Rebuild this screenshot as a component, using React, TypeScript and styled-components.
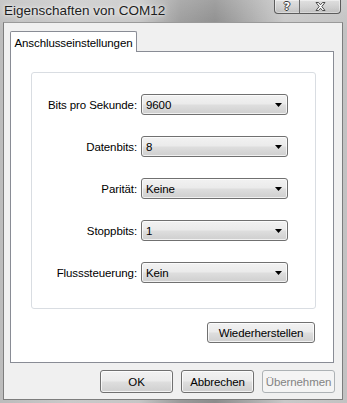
import React from "react";
import styled, { createGlobalStyle } from "styled-components";

const Global = createGlobalStyle`
  html, body { margin: 0; padding: 0; }
  body { background: #ffffff; font-family: "Liberation Sans", Arial, sans-serif; }
  * { box-sizing: border-box; }
`;

const Window = styled.div`
  width: 347px;
  height: 403px;
  display: flex;
  flex-direction: column;
  overflow: hidden;
  font-family: "Liberation Sans", Arial, sans-serif;
  background:
    linear-gradient(to bottom, rgba(255,255,255,0.18), rgba(255,255,255,0) 30px),
    linear-gradient(to right, #bcbcbc 0%, #c9c9c9 20%, #c6c6c6 40%, #9a9a9a 52%, #8c8c8c 62%, #a9a9a9 72%, #c8c8c8 82%, #c2c2c2 100%);
`;

const TitleBar = styled.div`
  height: 22px;
  flex: none;
  display: flex;
  align-items: flex-start;
  justify-content: space-between;
  padding: 0 6px 0 4px;
`;

const Title = styled.span`
  font-size: 13.5px;
  line-height: 20px;
  color: #1e1e1e;
  padding-top: 1px;
  text-shadow: 0 0 6px rgba(255,255,255,0.9), 0 0 3px rgba(255,255,255,0.8);
`;

const CaptionGroup = styled.div`
  display: flex;
  height: 14px;
  border: 1px solid #5c5c5c;
  border-top: none;
  border-radius: 0 0 4px 4px;
  overflow: hidden;
  box-shadow: inset 0 0 0 1px rgba(255,255,255,0.45);
`;

const CaptionButton = styled.div<{ $w: number; $divider?: boolean }>`
  width: ${(p) => p.$w}px;
  height: 100%;
  display: flex;
  align-items: center;
  justify-content: center;
  background: linear-gradient(to bottom, rgba(255,255,255,0.35), rgba(255,255,255,0.1) 50%, rgba(0,0,0,0.05));
  border-right: ${(p) => (p.$divider ? "1px solid #6a6a6a" : "none")};
  font-family: "DejaVu Sans", sans-serif;
  font-weight: bold;
  font-size: 11px;
  color: #ffffff;
  text-shadow: -1px 0 #3a3a3a, 1px 0 #3a3a3a, 0 -1px #3a3a3a, 0 1px #3a3a3a;
`;

const Client = styled.div`
  flex: 1;
  margin: 0 4px 3px 3px;
  border: 1px solid #7d7d7d;
  border-top-color: #9a9a9a;
  background: #f0f0f0;
  display: flex;
  flex-direction: column;
  padding: 8px 7px 6px 6px;
  font-size: 11.5px;
  letter-spacing: -0.1px;
`;

const TabStrip = styled.div`
  display: flex;
  position: relative;
  z-index: 1;
  margin-bottom: -1px;
`;

const Tab = styled.div`
  height: 21px;
  width: 127px;
  border: 1px solid #898c95;
  border-bottom: none;
  border-radius: 2px 2px 0 0;
  background: #ffffff;
  color: #000;
  display: flex;
  align-items: center;
  justify-content: center;
  padding-top: 1px;
`;

const Panel = styled.div`
  width: 324px;
  height: 312px;
  background: #ffffff;
  border: 1px solid #898c95;
  padding: 20px 17px 0 20px;
  display: flex;
  flex-direction: column;
`;

const Group = styled.div`
  width: 285px;
  height: 237px;
  border: 1px solid #d9dde2;
  border-radius: 3px;
  padding: 21px 27px 0 0;
  display: grid;
  grid-template-columns: 1fr 147px;
  grid-auto-rows: 21px;
  column-gap: 4px;
  row-gap: 21px;
  align-items: center;
`;

const Label = styled.label`
  color: #000;
  text-align: right;
  white-space: nowrap;
`;

const Combo = styled.div`
  height: 21px;
  border: 1px solid #707070;
  border-radius: 3px;
  background: linear-gradient(to bottom, #f2f2f2 0%, #ebebeb 45%, #dddddd 55%, #cfcfcf 100%);
  box-shadow: inset 0 0 0 1px rgba(255,255,255,0.7);
  display: flex;
  align-items: center;
  justify-content: space-between;
  padding: 0 5px 0 4px;
  color: #000;
`;

const Arrow = styled.svg`
  width: 7px;
  height: 4px;
  display: block;
`;

const PanelFooter = styled.div`
  display: flex;
  justify-content: flex-end;
  padding-right: 1px;
  margin-top: 13px;
`;

const Button = styled.div<{ $w: number; $disabled?: boolean; $h?: number }>`
  width: ${(p) => p.$w}px;
  height: ${(p) => p.$h ?? 23}px;
  border: 1px solid ${(p) => (p.$disabled ? "#adb2b5" : "#707070")};
  border-radius: 3px;
  background: ${(p) =>
    p.$disabled
      ? "#f4f4f4"
      : "linear-gradient(to bottom, #f2f2f2 0%, #ebebeb 45%, #dddddd 55%, #cfcfcf 100%)"};
  box-shadow: inset 0 0 0 1px ${(p) => (p.$disabled ? "#f4f4f4" : "rgba(255,255,255,0.75)")};
  display: flex;
  align-items: center;
  justify-content: center;
  color: ${(p) => (p.$disabled ? "#838383" : "#000")};
`;

const ButtonRow = styled.div`
  display: flex;
  justify-content: flex-end;
  gap: 8px;
  margin-top: 7px;
  width: 325px;
`;

const rows = [
  { label: "Bits pro Sekunde:", value: "9600" },
  { label: "Datenbits:", value: "8" },
  { label: "Parität:", value: "Keine" },
  { label: "Stoppbits:", value: "1" },
  { label: "Flusssteuerung:", value: "Kein" },
];

export default function App() {
  return (
    <>
      <Global />
      <Window>
        <TitleBar>
          <Title>Eigenschaften von COM12</Title>
          <CaptionGroup>
            <CaptionButton $w={25} $divider>?</CaptionButton>
            <CaptionButton $w={40}>
              <svg width="11" height="9" viewBox="0 0 11 9">
                <path
                  d="M1 0.5 H3.5 L5.5 2.8 L7.5 0.5 H10 L6.8 4.5 L10 8.5 H7.5 L5.5 6.2 L3.5 8.5 H1 L4.2 4.5 Z"
                  fill="#ffffff"
                  stroke="#3a3a3a"
                  strokeWidth="0.9"
                />
              </svg>
            </CaptionButton>
          </CaptionGroup>
        </TitleBar>
        <Client>
          <TabStrip>
            <Tab>Anschlusseinstellungen</Tab>
          </TabStrip>
          <Panel>
            <Group>
              {rows.map((r) => (
                <React.Fragment key={r.label}>
                  <Label>{r.label}</Label>
                  <Combo>
                    <span>{r.value}</span>
                    <Arrow viewBox="0 0 7 4">
                      <polygon points="0,0 7,0 3.5,4" fill="#000" />
                    </Arrow>
                  </Combo>
                </React.Fragment>
              ))}
            </Group>
            <PanelFooter>
              <Button $w={108} $h={21}>Wiederherstellen</Button>
            </PanelFooter>
          </Panel>
          <ButtonRow>
            <Button $w={73}>OK</Button>
            <Button $w={73}>Abbrechen</Button>
            <Button $w={73} $disabled>Übernehmen</Button>
          </ButtonRow>
        </Client>
      </Window>
    </>
  );
}
